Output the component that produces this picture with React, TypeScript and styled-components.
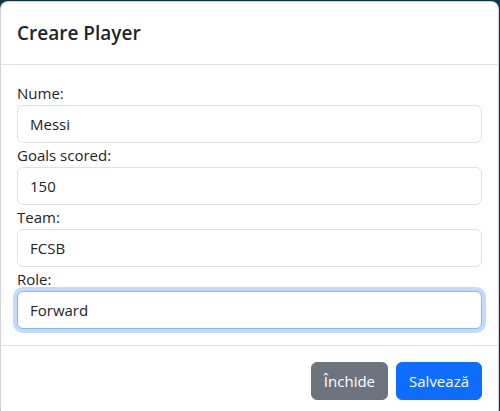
import React from 'react'
import styled, { createGlobalStyle, css } from 'styled-components'

const GlobalStyle = createGlobalStyle`
  html, body {
    margin: 0;
    padding: 0;
    height: 100%;
    overflow: hidden;
    background: #0b3643;
  }
  body {
    font-family: "Open Sans", "Noto Sans", Arial, sans-serif;
    color: #212529;
  }
  * {
    box-sizing: border-box;
  }
`

const fields = [
  { label: 'Nume:', value: 'Messi' },
  { label: 'Goals scored:', value: '150' },
  { label: 'Team:', value: 'FCSB' },
  { label: 'Role:', value: 'Forward', focused: true },
]

export default function App() {
  return (
    <>
      <GlobalStyle />
      <Backdrop>
        <Modal>
          <Header>
            <Title>Creare Player</Title>
          </Header>
          <Body>
            {fields.map((f) => (
              <Field key={f.label}>
                <Label>{f.label}</Label>
                <Input readOnly value={f.value} $focused={!!f.focused} />
              </Field>
            ))}
          </Body>
          <Footer>
            <Button $variant='secondary'>Închide</Button>
            <Button $variant='primary'>Salvează</Button>
          </Footer>
        </Modal>
      </Backdrop>
    </>
  )
}

const Backdrop = styled.div`
  padding: 1px 1px 0 0;
`
const Modal = styled.div`
  width: 499px;
  background: #fff;
  border: 1px solid rgba(0, 0, 0, 0.175);
  border-radius: 8px;
  display: flex;
  flex-direction: column;
`
const Header = styled.div`
  padding: 16px;
  border-bottom: 1px solid #dee2e6;
`
const Title = styled.h5`
  margin: 0;
  font-size: 19px;
  font-weight: 600;
  line-height: 30px;
  color: #212529;
`
const Body = styled.div`
  padding: 16px;
`
const Field = styled.div`
  display: flex;
  flex-direction: column;
`
const Label = styled.label`
  font-size: 15px;
  line-height: 24px;
  color: #212529;
`
const Input = styled.input<{ $focused: boolean }>`
  display: block;
  width: 100%;
  height: 38px;
  padding: 6px 12px;
  font-family: inherit;
  font-size: 15px;
  line-height: 24px;
  color: #212529;
  background: #fff;
  border: 1px solid #dee2e6;
  border-radius: 6px;
  outline: none;
  ${(p) =>
    p.$focused &&
    css`
      border-color: #86b7fe;
      box-shadow: 0 0 0 4px rgba(13, 110, 253, 0.25);
    `}
`
const Footer = styled.div`
  display: flex;
  justify-content: flex-end;
  align-items: center;
  padding: 12px;
  border-top: 1px solid #dee2e6;
`
const Button = styled.button<{ $variant: 'primary' | 'secondary' }>`
  margin: 4px;
  height: 38px;
  padding: 6px 12px;
  font-family: inherit;
  font-size: 15px;
  line-height: 24px;
  color: #fff;
  border-radius: 6px;
  border: 1px solid ${(p) => (p.$variant === 'primary' ? '#0d6efd' : '#6c757d')};
  background: ${(p) => (p.$variant === 'primary' ? '#0d6efd' : '#6c757d')};
`
